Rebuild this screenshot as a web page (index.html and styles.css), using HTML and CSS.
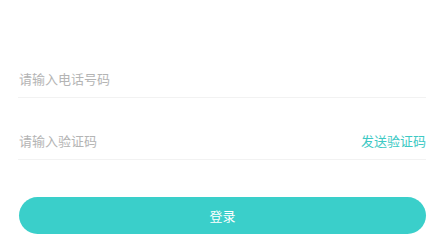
FILE: index.html
```
<!DOCTYPE html>
<html>
<head lang="zh">
    <meta charset="UTF-8">
    <title>登录</title>
    <link rel="stylesheet" href="styles.css">
</head>
<body>
<div class="login">
    <!--手机号-->
    <div class="field first">
        <input class="ipt" type="text" placeholder="请输入电话号码">
    </div>
    <!--验证码-->
    <div class="field">
        <input class="ipt" type="text" placeholder="请输入验证码">
        <span class="sendCode">发送验证码</span>
    </div>
    <div class="btnLogin">登录</div>
</div>
</body>
</html>
```

FILE: styles.css
```
*{margin:0;padding:0;box-sizing:border-box}
body{
    background:#fff;
    font-family:"Noto Sans CJK SC","Noto Sans",sans-serif;
}
.login{
    padding:59px 17px 0 18px;
}
.field{
    height:39px;display:flex;align-items:center;
    border-bottom:1px solid #f2f2f2;
    margin-top:23px;padding-left:1px;
}
.field.first{margin-top:0}
.ipt{
    flex:1;border:none;outline:none;
    font-family:inherit;font-size:13px;color:#333;
    background:transparent;height:100%;
}
.ipt::placeholder{color:#b4b4b4}
.sendCode{
    font-size:13px;color:#3dc9c4;cursor:pointer;
}
.btnLogin{
    margin-top:37px;height:37px;margin-left:1px;
    border-radius:19px;background:#3acfca;
    color:#fff;font-size:13px;
    display:flex;align-items:center;justify-content:center;
}
```
